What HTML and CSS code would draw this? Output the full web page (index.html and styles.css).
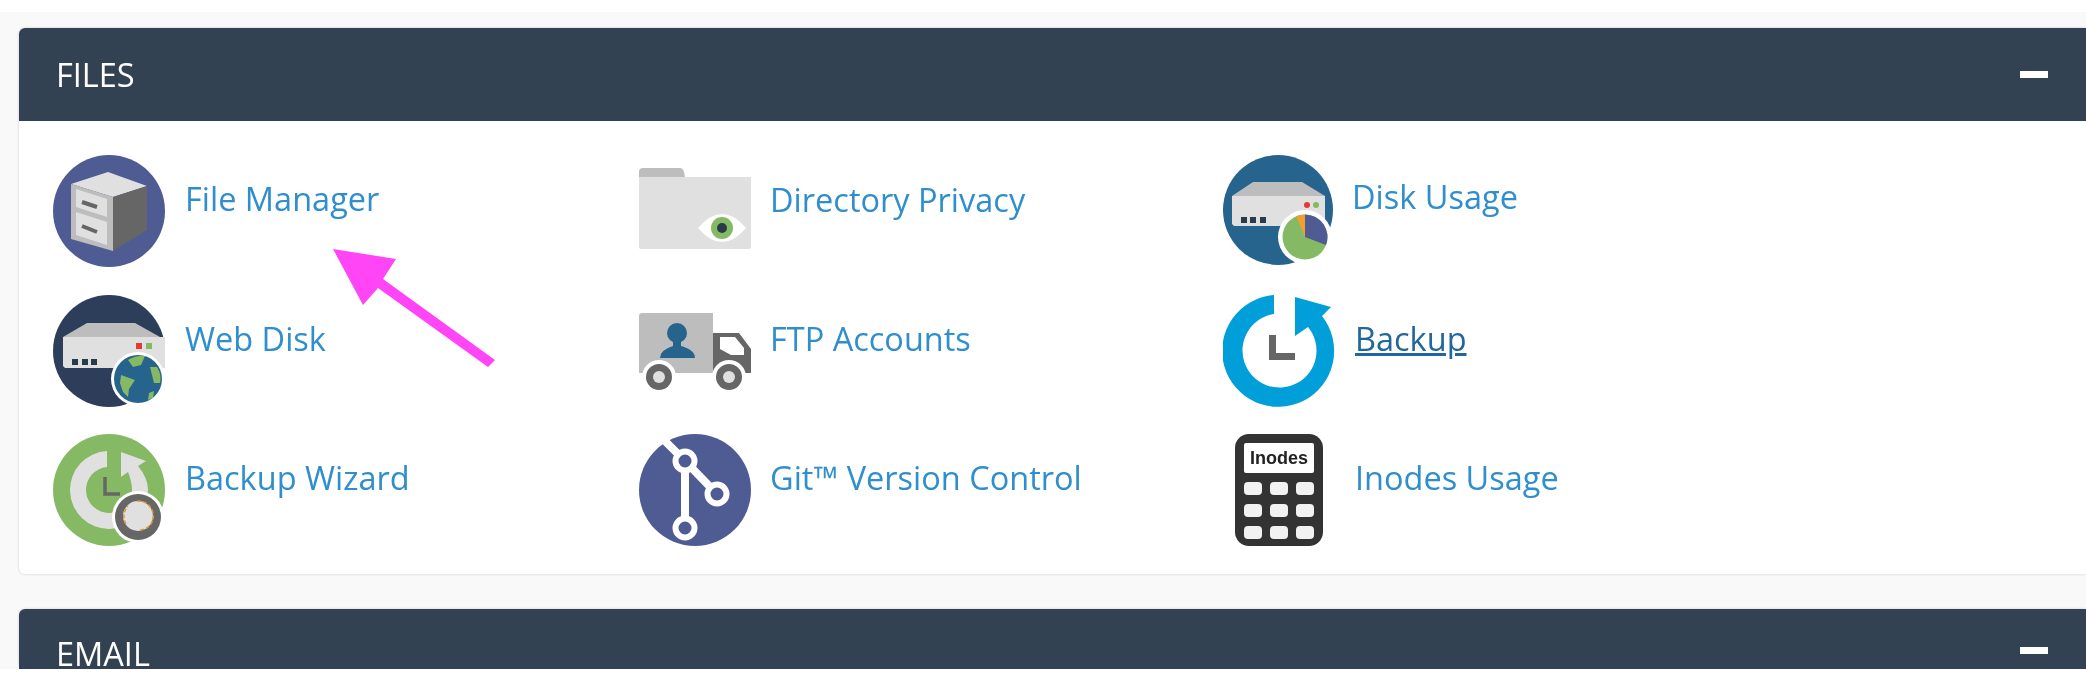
FILE: index.html
```html
<!DOCTYPE html>
<html lang="en">
<head>
    <meta charset="UTF-8">
    <meta name="viewport" content="width=device-width, initial-scale=1.0">
    <title>cPanel files</title>
    <link rel="stylesheet" href="styles.css">
</head>
<body>
    <div class="page">
        <section class="panel">
            <div class="panel-heading">
                <h2>FILES</h2>
                <span class="collapse-icon"></span>
            </div>
            <div class="panel-body">
                <a class="item" href="#">
                    <svg class="icon" viewBox="0 0 112 112">
                        <circle cx="56" cy="56" r="56" fill="#4f5b93"/>
                        <path d="M18 29 55 17 94 31 60 42Z" fill="#e0e0e0"/>
                        <path d="M60 42 94 31V75L60 96Z" fill="#666"/>
                        <path d="M18 29 60 42V96L18 84Z" fill="#bdbdbd"/>
                        <path d="M23 34 54 44V62L23 52ZM23 57 54 67V90L23 80Z" fill="#e0e0e0"/>
                        <path d="M29 47 44 52M29 71 44 77" stroke="#666" stroke-width="4" fill="none"/>
                    </svg>
                    <span class="label">File Manager</span>
                </a>
                <a class="item col-two" href="#">
                    <svg class="icon" viewBox="0 0 112 112">
                        <path d="M0 17Q0 13 4 13H41Q45 13 46 22H0Z" fill="#bdbdbd"/>
                        <path d="M0 22H112V92Q112 94 110 94H2Q0 94 0 92Z" fill="#e0e0e0"/>
                        <path d="M59 73Q83 45 107 73Q83 101 59 73Z" fill="#fff"/>
                        <circle cx="83" cy="73" r="11" fill="#85b963"/>
                        <circle cx="83" cy="73" r="5" fill="#293a4a"/>
                    </svg>
                    <span class="label label-low">Directory Privacy</span>
                </a>
                <a class="item" href="#">
                    <svg class="icon" viewBox="0 0 112 112">
                        <circle cx="55" cy="55" r="55" fill="#26648e"/>
                        <path d="M9 41 30 27H79L102 41Z" fill="#bdbdbd"/>
                        <path d="M9 41H102V69Q102 71 100 71H11L9 69Z" fill="#e0e0e0"/>
                        <circle cx="84" cy="50" r="3" fill="#e53935"/>
                        <circle cx="93" cy="50" r="3" fill="#85b963"/>
                        <path d="M18 62h6v6h-6zM27 62h6v6h-6zM37 62h6v6h-6z" fill="#293a4a"/>
                        <circle cx="82" cy="82" r="27" fill="#fff"/>
                        <circle cx="82" cy="82" r="22.5" fill="#85b963"/>
                        <path d="M82 82V59.5A22.5 22.5 0 0 1 103 90Z" fill="#4f5b93"/>
                        <path d="M82 82 73 61Q77 59.5 82 59.5Z" fill="#f0a030"/>
                    </svg>
                    <span class="label label-high">Disk Usage</span>
                </a>
                <a class="item" href="#">
                    <svg class="icon" viewBox="0 0 112 112">
                        <circle cx="56" cy="56" r="56" fill="#2c3e5a"/>
                        <path d="M10 42 34 28H82L107 42Z" fill="#bdbdbd"/>
                        <path d="M10 42H112V73H12L10 71Z" fill="#e0e0e0"/>
                        <rect x="83" y="48" width="6" height="6" fill="#e53935"/>
                        <rect x="93" y="48" width="6" height="6" fill="#85b963"/>
                        <path d="M19 64h6v6h-6zM29 64h6v6h-6zM38 64h6v6h-6z" fill="#293a4a"/>
                        <circle cx="85" cy="84" r="27" fill="#fff"/>
                        <circle cx="85" cy="84" r="24" fill="#26648e"/>
                        <path d="M68 80 82 85 76 94 75 102 70 97 67 88ZM75 65Q84 60 92 61L88 70 80 72ZM97 72 104 72Q109 80 107 88L101 88ZM96 98 101 96 100 103 95 105Z" fill="#85b963"/>
                    </svg>
                    <span class="label">Web Disk</span>
                </a>
                <a class="item col-two" href="#">
                    <svg class="icon" viewBox="0 0 112 112">
                        <path d="M3 18H74V78H0V21Q0 18 3 18Z" fill="#bdbdbd"/>
                        <path d="M74 38H100L112 54V78H74Z" fill="#666"/>
                        <path d="M81 42H96L105 53V60H92L81 54Z" fill="#fff"/>
                        <circle cx="38" cy="38" r="10" fill="#26648e"/>
                        <path d="M34 44H42V51Q56 55 56 63H21Q21 55 34 51Z" fill="#26648e"/>
                        <circle cx="20" cy="82" r="17" fill="#fff"/>
                        <circle cx="90" cy="82" r="17" fill="#fff"/>
                        <circle cx="20" cy="82" r="13" fill="#666"/>
                        <circle cx="90" cy="82" r="13" fill="#666"/>
                        <circle cx="20" cy="82" r="6" fill="#e0e0e0"/>
                        <circle cx="90" cy="82" r="6" fill="#e0e0e0"/>
                    </svg>
                    <span class="label">FTP Accounts</span>
                </a>
                <a class="item" href="#">
                    <svg class="icon" viewBox="0 0 112 112">
                        <path d="M51 0A56 56 0 1 0 99 21L108 12 72 2V41L85 32A37 37 0 1 1 51 19Z" fill="#009fd9"/>
                        <path d="M49.5 40V61.5H72" fill="none" stroke="#666" stroke-width="7"/>
                    </svg>
                    <span class="label current">Backup</span>
                </a>
                <a class="item" href="#">
                    <svg class="icon" viewBox="0 0 112 112">
                        <circle cx="56" cy="56" r="56" fill="#85b963"/>
                        <path d="M54 17A39 39 0 1 0 95 56H79A23 23 0 1 1 54 33Z" fill="#e0e0e0"/>
                        <path d="M68 18 93 27 85 32Q95 44 95 56H79Q79 48 75 38L68 43Z" fill="#e0e0e0"/>
                        <path d="M52 43V60H67" fill="none" stroke="#666" stroke-width="3.5"/>
                        <circle cx="85" cy="83" r="26" fill="#fff"/>
                        <circle cx="85" cy="83" r="23" fill="#666"/>
                        <circle cx="85" cy="82" r="15" fill="#e0e0e0"/>
                        <path d="M73 90A15 15 0 0 1 75 72M84 67A15 15 0 0 1 98 90Q94 96 85 96" fill="none" stroke="#d9982e" stroke-width="1.5" stroke-dasharray="4 2"/>
                    </svg>
                    <span class="label">Backup Wizard</span>
                </a>
                <a class="item col-two" href="#">
                    <svg class="icon" viewBox="0 0 112 112">
                        <circle cx="56" cy="56" r="56" fill="#4f5b93"/>
                        <path d="M26 7 46 27M46 27V94M46 27 78 60" fill="none" stroke="#fff" stroke-width="8"/>
                        <circle cx="46" cy="27" r="9.5" fill="#4f5b93" stroke="#fff" stroke-width="6"/>
                        <circle cx="78" cy="60" r="9.5" fill="#4f5b93" stroke="#fff" stroke-width="6"/>
                        <circle cx="46" cy="94" r="9.5" fill="#4f5b93" stroke="#fff" stroke-width="6"/>
                    </svg>
                    <span class="label">Git™ Version Control</span>
                </a>
                <a class="item" href="#">
                    <span class="calc">
                        <span class="calc-screen">Inodes</span>
                        <span class="calc-keys">
                            <i></i><i></i><i></i><i></i><i></i><i></i><i></i><i></i><i></i>
                        </span>
                    </span>
                    <span class="label">Inodes Usage</span>
                </a>
            </div>
        </section>
        <section class="panel panel-cut">
            <div class="panel-heading">
                <h2>EMAIL</h2>
                <span class="collapse-icon"></span>
            </div>
        </section>
    </div>
    <svg class="arrow" viewBox="0 0 170 130">
        <path d="M2 2 65 12 52 32 164 113 157 120 47 41 32 58Z" fill="#ff45f5"/>
    </svg>
</body>
</html>
```

FILE: styles.css
```css
html, body {
    margin: 0;
    padding: 0;
    background-color: #fff;
}

body {
    height: 680px;
    overflow: hidden;
    position: relative;
    font-family: "Open Sans", sans-serif;
}

.page {
    margin-top: 12px;
    height: 657px;
    overflow: hidden;
    padding: 16px 0 0 19px;
    box-sizing: border-box;
    background-color: #f9f9f9;
    filter: blur(0.6px);
}

.panel {
    background-color: #fff;
    border-radius: 6px 0 0 6px;
    box-shadow: 0 0 3px rgba(0, 0, 0, 0.18);
}

.panel-cut {
    margin-top: 35px;
}

.panel-heading {
    height: 93px;
    padding: 0 38px 0 37px;
    display: flex;
    justify-content: space-between;
    align-items: center;
    background-color: #334252;
    border-radius: 6px 0 0 0;
}

.panel-cut .panel-heading {
    height: 60px;
    align-items: flex-start;
}

.panel-heading h2 {
    margin: 0;
    font-size: 32.5px;
    font-weight: 400;
    color: #fff;
}

.panel-cut .panel-heading h2 {
    padding-top: 31px;
    line-height: 28px;
}

.collapse-icon {
    width: 28px;
    height: 7px;
    background-color: #fff;
}

.panel-cut .collapse-icon {
    margin-top: 38px;
}

.panel-body {
    height: 453px;
    padding: 34px 0 0 34px;
    box-sizing: border-box;
    display: grid;
    grid-template-columns: 586px 584px 1fr;
    grid-auto-rows: 139.5px;
}

.item {
    display: flex;
    align-items: flex-start;
    text-decoration: none;
    color: #2f8ecd;
}

.icon {
    width: 112px;
    height: 112px;
    flex-shrink: 0;
}

.label {
    margin-left: 20px;
    padding-top: 22px;
    font-size: 32.5px;
    line-height: 44px;
}

.col-two .label {
    margin-left: 19px;
}

.label-low {
    padding-top: 23px;
}

.label-high {
    margin-left: 17px;
    padding-top: 20px;
}

.current {
    text-decoration: underline;
    color: #22679b;
}

.calc {
    box-sizing: border-box;
    width: 88px;
    height: 112px;
    flex-shrink: 0;
    margin: 0 12px;
    padding: 9px;
    background-color: #333;
    border-radius: 14px;
    display: flex;
    flex-direction: column;
    gap: 9px;
}

.calc-screen {
    height: 30px;
    background-color: #fff;
    border-radius: 2px;
    color: #222;
    font-family: "Liberation Sans", sans-serif;
    font-size: 18px;
    font-weight: 700;
    line-height: 30px;
    text-align: center;
}

.calc-keys {
    display: grid;
    grid-template-columns: repeat(3, 18px);
    grid-auto-rows: 13px;
    justify-content: space-between;
    row-gap: 9px;
}

.calc-keys i {
    background-color: #f2f2f2;
    border-radius: 4px;
}

.arrow {
    position: absolute;
    left: 331px;
    top: 247px;
    width: 170px;
    height: 130px;
}
```
